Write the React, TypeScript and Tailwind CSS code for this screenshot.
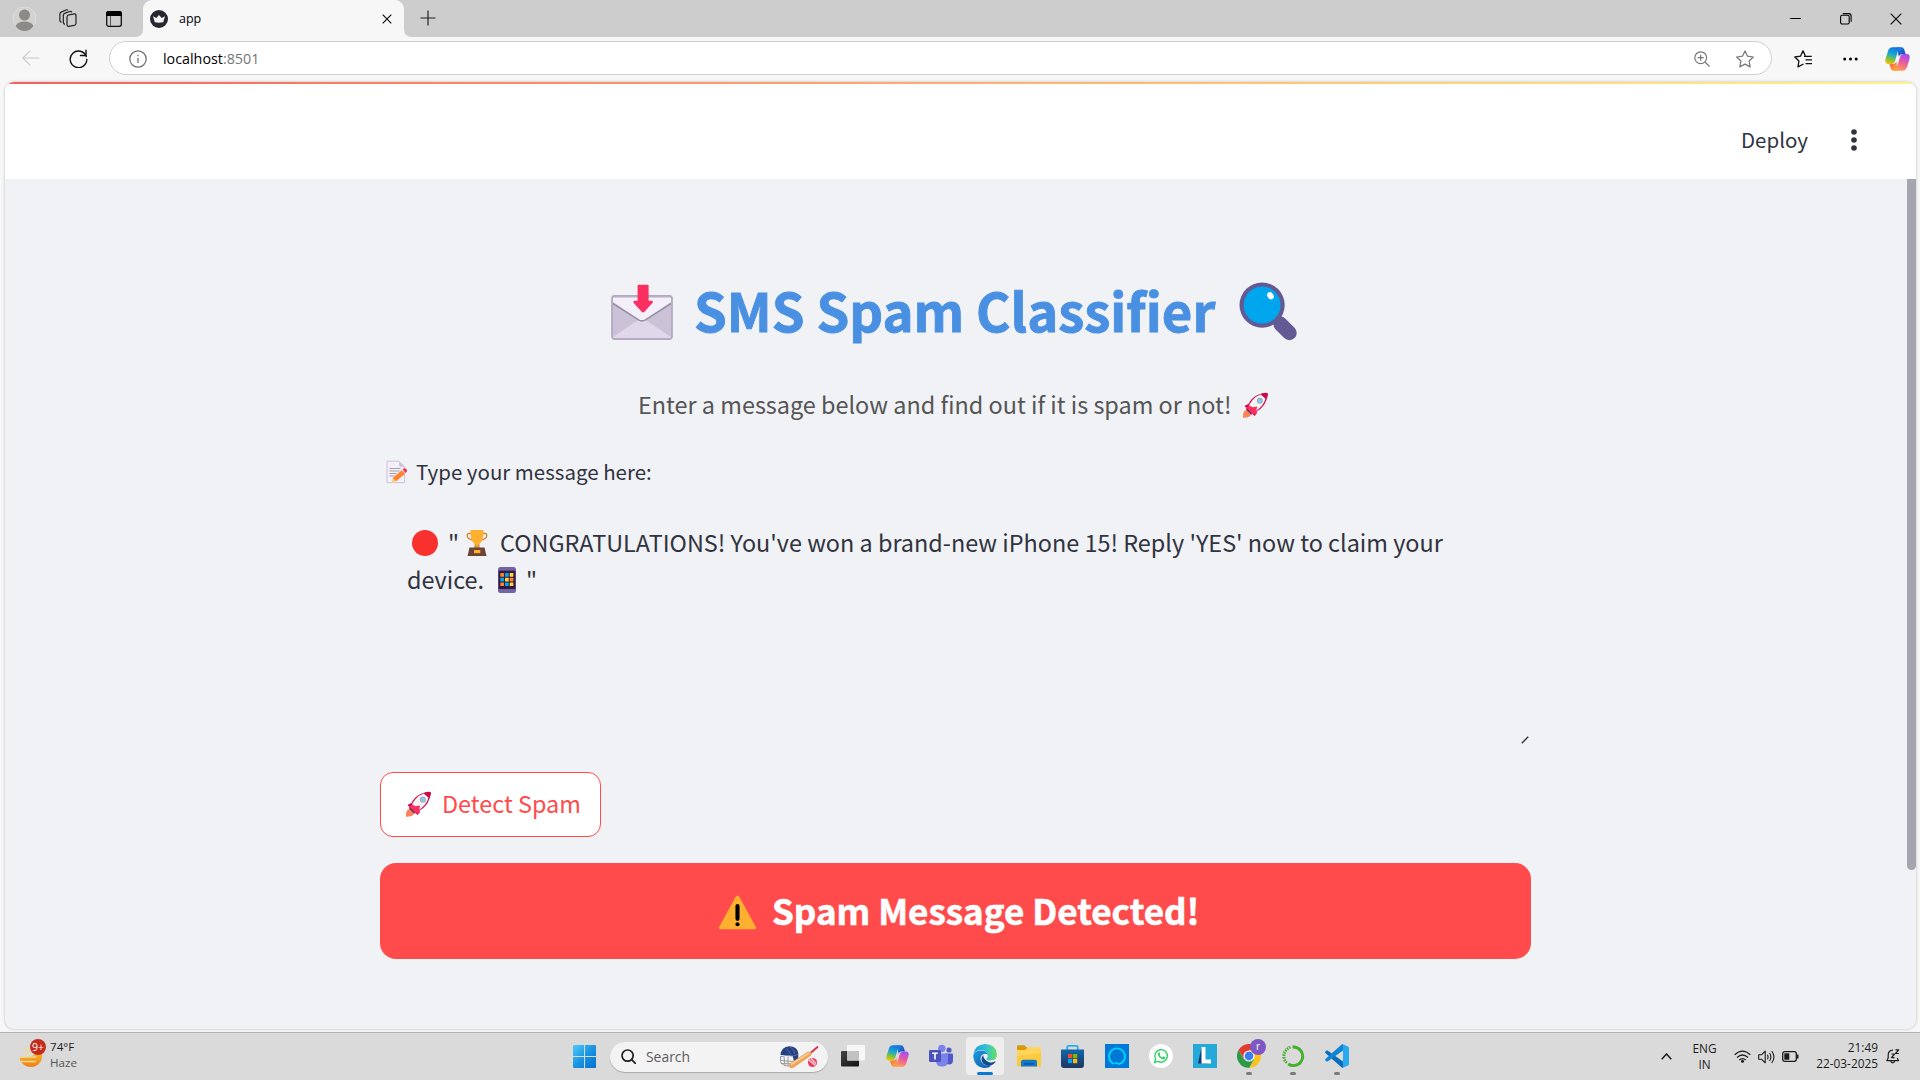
import type { ReactNode } from "react";

type IconProps = { className?: string };

/* ---------- emoji ---------- */

function EnvelopeEmoji({ className }: IconProps) {
  return (
    <svg viewBox="0 0 64 58" className={className} fill="none">
      <rect x="1" y="12" width="61" height="44" rx="3" fill="#cbc2d7" />
      <path d="M2 54 31.5 34 61 54v1H2z" fill="#e0d7ea" />
      <path d="M2 18 28 36q3.500 2 7 0L61 18v-4H2z" fill="#f4f0fa" />
      <path d="M2 20 28 36.500q3.500 2 7 0L61 20" stroke="#998ea4" strokeWidth="1.600" />
      <rect x="1" y="12" width="61" height="44" rx="2.500" stroke="#b4a9c0" strokeWidth="1.800" />
      <path d="M27 1.500q0-.8.8-.8h9.600q.8 0 .8.800V17h3.600q1.600.8.300 2.300l-8.300 9.300q-1.200 1-2.400 0l-8.300-9.300Q22 17.500 23.500 17H27z" fill="#fb2f60" />
    </svg>
  );
}

function MagnifierEmoji({ className }: IconProps) {
  return (
    <svg viewBox="0 0 60 60" className={className}>
      <path d="M35 38q0-3 3-3h5q2 0 4 2l9.500 9.500a7.300 7.300 0 0 1-10.500 10.500l-9-9q-2-2-2-5z" fill="#635994" />
      <circle cx="23.500" cy="23.500" r="23" fill="#635994" />
      <circle cx="23.500" cy="23.500" r="18.800" fill="#00a6ed" />
      <ellipse cx="32" cy="14" rx="3" ry="4" transform="rotate(-32 32 14)" fill="#fff" />
    </svg>
  );
}

function RocketEmoji({ className }: IconProps) {
  return (
    <svg viewBox="0 0 27 27" className={className}>
      <path d="M7 12 2.500 14.300q-.8.600.2 1l2.700 2zM15 20l-1.800 4.500q-.6.900-1.200 0L9.800 22z" fill="#ca0b4a" />
      <path d="M25 1Q15 1.500 10 7 5.500 12 5 16.500l5.500 5.500Q17 20 21 15q5-6 5-13.500z" fill="#ca0b4a" />
      <path d="M19 2.600Q13.500 4.500 10.500 8.200 7 12.200 5.800 16.500l5 4.700q5.500-2 9.200-6.600 3-4 4-8.200z" fill="#f4f4f4" />
      <path d="M26.400 1.200Q23 .2 19 2.400l5.500 5.200Q26.800 4 26.400 1.200z" fill="#ca0b4a" />
      <path d="m7 14 3.500 1.800 4.800-.8-1 4.500 1 3-3.300.2-3 1-5-5L3.500 17z" fill="#fb2f60" />
      <path d="M5.500 18.500 9 22l-1 3.300q-3 1.700-7.500 1.400-.2-4.800 1.500-7.200z" fill="#ff8259" />
      <path d="m5 17.500 4.600 4.600-1 1.100-4.500-4.500z" fill="#533566" />
      <circle cx="18" cy="9" r="3" fill="#9b9b9b" />
      <circle cx="18" cy="9" r="2.300" fill="#83cbff" />
    </svg>
  );
}

function MemoEmoji({ className }: IconProps) {
  return (
    <svg viewBox="0 0 22 24" className={className}>
      <path d="M1 1.200h12l5.500 5.500v16H1z" fill="#f3eef8" stroke="#cdc4d6" strokeWidth="1" />
      <path d="M13 1.200V5q0 1.700 1.800 1.700h3.700z" fill="#cdc4d6" />
      <path d="M3.500 8.500h11M3.500 11h10M3.500 13.500h7M3.500 16h5" stroke="#9b9b9b" strokeWidth=".9" />
      <path d="m5.500 22.500 1.200-4.600 3.500 3.300z" fill="#ffce7c" />
      <path d="m6.700 17.900 9-7.700 3.300 3.500-8.800 7.500z" fill="#ff822d" />
      <path d="m16.500 9.600 1.300-1.100q1.300-.7 2.500.5t.5 2.700L19.600 13z" fill="#fb2f60" />
    </svg>
  );
}

function TrophyEmoji({ className }: IconProps) {
  return (
    <svg viewBox="0 0 22 26" className={className} fill="none">
      <path d="M6 3.500H3Q1 3.500 1.300 6t3 3.300L7 10M16 3.500h3q2 0 1.700 2.500t-3 3.300L15 10" stroke="#d3883e" strokeWidth="1.400" />
      <path d="M9 12h4l.8 6H8.200z" fill="#d3883e" />
      <path d="M4.500 0h13q.2 6-1 9.500Q14.500 14 12 14.500v2h-2v-2Q7.500 14 5.500 9.500 4.300 6 4.500 0z" fill="#ffb02e" />
      <path d="M3.500 17.500h15l2 8.500h-19z" fill="#6d4534" />
      <rect x="8" y="20" width="6.300" height="3.200" fill="#ffb02e" />
    </svg>
  );
}

function PhoneEmoji({ className }: IconProps) {
  return (
    <svg viewBox="0 0 18 26" className={className}>
      <rect width="18" height="26" rx="2.500" fill="#7163a6" />
      <rect x=".6" y="3.700" width="16.800" height="18.300" fill="#321b41" />
      <rect x="2.300" y="6" width="3.700" height="3.700" rx=".5" fill="#ff822d" />
      <rect x="7" y="6" width="3.700" height="3.700" rx=".5" fill="#00a6ed" />
      <rect x="11.700" y="6" width="3.700" height="3.700" rx=".5" fill="#fcd53f" />
      <rect x="2.300" y="10.700" width="3.700" height="3.700" rx=".5" fill="#00a6ed" />
      <rect x="7" y="10.700" width="3.700" height="3.700" rx=".5" fill="#fcd53f" />
      <rect x="11.700" y="10.700" width="3.700" height="3.700" rx=".5" fill="#ff822d" />
      <rect x="2.300" y="15.400" width="3.700" height="3.700" rx=".5" fill="#ff822d" />
      <rect x="7" y="15.400" width="3.700" height="3.700" rx=".5" fill="#00a6ed" />
      <rect x="11.700" y="15.400" width="3.700" height="3.700" rx=".5" fill="#fcd53f" />
    </svg>
  );
}

function WarningEmoji({ className }: IconProps) {
  return (
    <svg viewBox="0 0 40 35" className={className}>
      <path d="M18 1.500q2-2.500 4 0l17 31q.7 2-1.500 2.300h-35Q.3 34.500 1 32.500z" fill="#ffb02e" />
      <path d="M20 11v13" stroke="#000" strokeWidth="4.200" strokeLinecap="round" />
      <circle cx="20" cy="29.500" r="2.100" fill="#000" />
    </svg>
  );
}

/* ---------- shared marks ---------- */

function CopilotIcon({ className, id }: IconProps & { id: string }) {
  const a = id + "a";
  const b = id + "b";
  const c = id + "c";
  const d = id + "d";
  return (
    <svg viewBox="0 0 25 24" className={className}>
      <defs>
        <linearGradient id={a} x1=".6" y1="0" x2=".3" y2="1">
          <stop offset="0" stopColor="#1474e0" />
          <stop offset=".4" stopColor="#15a5d8" />
          <stop offset=".7" stopColor="#6fc24a" />
          <stop offset="1" stopColor="#f2c200" />
        </linearGradient>
        <linearGradient id={b} x1=".6" y1="0" x2=".3" y2="1">
          <stop offset="0" stopColor="#a44df0" />
          <stop offset=".5" stopColor="#ee5c9c" />
          <stop offset="1" stopColor="#ff9f4a" />
        </linearGradient>
        <linearGradient id={c} x1="0" y1="0" x2="1" y2="1">
          <stop offset="0" stopColor="#1b8df0" />
          <stop offset="1" stopColor="#1a3fa8" />
        </linearGradient>
        <linearGradient id={d} x1="0" y1="0" x2="1" y2="1">
          <stop offset="0" stopColor="#f5622e" />
          <stop offset="1" stopColor="#ffb04a" />
        </linearGradient>
      </defs>
      <path d="M12 .3h4.500q2 0 2.700 2.200l1.500 4.700h-4q-2.200 0-3 2.500z" fill={`url(#${c})`} />
      <path d="M13 23.700H8.500q-2 0-2.700-2.200l-1.500-4.700h4q2.200 0 3-2.500z" fill={`url(#${d})`} />
      <path d="M7.500.3h8q-1.500.5-2.200 2.700L10 14q-.9 2.900-3.500 2.900H3.300Q-.5 16.800.5 12L3 4Q4.200.3 7.500.3z" fill={`url(#${a})`} />
      <path d="M17.500 23.700h-8q1.500-.5 2.200-2.700L15 10q.9-2.900 3.500-2.900h3.200q3.800.1 2.800 4.900L22 20q-1.200 3.700-4.500 3.700z" fill={`url(#${b})`} />
    </svg>
  );
}

/* ---------- browser chrome ---------- */

function TabStrip() {
  return (
    <div className="flex h-[37px] items-start bg-[#cdcdcd] text-black">
      <svg viewBox="0 0 24 26" className="mt-[6px] ml-[12px] h-[26px] w-[24px]">
        <circle cx="12.500" cy="12.500" r="11.500" fill="#d4d2cf" stroke="#e0dedb" strokeWidth="1" />
        <circle cx="12.500" cy="9" r="5.500" fill="#8c8986" />
        <path d="M3.500 20q2-4.500 9-4.500t9 4.500q-3.500 5-9 5t-9-5z" fill="#8c8986" />
      </svg>
      <svg viewBox="0 0 20 20" className="mt-[9px] ml-[22px] h-[20px] w-[20px]" fill="none" stroke="#222" strokeWidth="1.200" strokeLinejoin="round">
        <rect x="9" y="5.500" width="9" height="11.500" rx="1.800" transform="skewY(-9) translate(0 2)" />
        <path d="M7 15.300Q5.300 15 5.300 13.500V6.400q0-1.500 1.300-2l5-1.900q1.400-.4 2.200.8" />
        <path d="M3.600 13.200q-1.700-.2-1.700-1.800V5q0-1.300 1.200-1.900L8 1q1.200-.4 2 .3" />
      </svg>
      <svg viewBox="0 0 16 16" className="mt-[11px] ml-[28px] h-[16px] w-[16px]">
        <rect x=".7" y=".7" width="14.600" height="14.600" rx="2" fill="none" stroke="#111" strokeWidth="1.300" />
        <path d="M0 5V2.500Q0 0 2.500 0h11Q16 0 16 2.500V5z" />
        <path d="M4.500 5v10" stroke="#555" />
      </svg>
      <svg viewBox="0 0 8 8" className="mt-[29px] ml-[13px] h-[8px] w-[8px]">
        <path d="M8 0v8H0Q8 8 8 0z" fill="#f7f7f7" />
      </svg>
      <div className="flex h-[37px] w-[261px] items-start rounded-t-[9px] bg-[#f7f7f7]">
        <svg viewBox="0 0 18 18" className="mt-[10px] ml-[7px] h-[18px] w-[18px]">
          <circle cx="9" cy="9" r="9" fill="#262730" />
          <path d="M3 6.300 6.300 8 9 5l2.700 3L15 6.300l-1.800 6q-4.200.9-8.400 0z" fill="#f5f5f5" />
        </svg>
        <span className="mt-[9px] ml-[11px] w-[180px] font-[Open_Sans,sans-serif] text-[12.500px] leading-[20px]">app</span>
        <svg viewBox="0 0 10 10" className="mt-[14px] ml-[23px] h-[10px] w-[10px]" stroke="#111" strokeWidth="1.200">
          <path d="m.7.7 8.600 8.600M9.300.7.700 9.300" />
        </svg>
      </div>
      <svg viewBox="0 0 8 8" className="mt-[29px] h-[8px] w-[8px]">
        <path d="M0 0v8h8Q0 8 0 0z" fill="#f7f7f7" />
      </svg>
      <svg viewBox="0 0 16 16" className="mt-[10px] ml-[8px] h-[16px] w-[16px]" stroke="#222" strokeWidth="1.200">
        <path d="M8 .5v15M.5 8h15" />
      </svg>
      <div className="grow" />
      <svg viewBox="0 0 11 11" className="mt-[13px] h-[11px] w-[11px]" stroke="#000" strokeWidth="1">
        <path d="M0 5.500h11" />
      </svg>
      <svg viewBox="0 0 12 12" className="mt-[13px] ml-[39px] h-[12px] w-[12px]" fill="none" stroke="#000" strokeWidth="1.100">
        <rect x=".6" y="2.200" width="8.600" height="8.800" rx="1.500" />
        <path d="M2.800.6h6q2.300.1 2.300 2.400v5.800" />
      </svg>
      <svg viewBox="0 0 12 12" className="mt-[13px] mr-[18px] ml-[38px] h-[12px] w-[12px]" stroke="#000" strokeWidth="1.100">
        <path d="m.7.7 10.600 10.600M11.300.7.700 11.300" />
      </svg>
    </div>
  );
}

function Toolbar() {
  return (
    <div className="flex h-[45px] items-start bg-[#f7f7f7]">
      <svg viewBox="0 0 18 16" className="mt-[13px] ml-[22px] h-[16px] w-[18px]" fill="none" stroke="#cacaca" strokeWidth="1.200">
        <path d="M17.500 8H.8M8.300.6.800 8l7.500 7.400" />
      </svg>
      <svg viewBox="0 0 19 19" className="mt-[12px] ml-[29px] h-[19px] w-[19px]" fill="none" stroke="#111" strokeWidth="1.400">
        <path d="M17.300 7.500A8.300 8.300 0 1 0 17.800 10.500" strokeLinecap="round" />
        <path d="M17 1.200v5.300h-5.500" strokeLinejoin="round" strokeLinecap="round" />
      </svg>
      <div className="mt-[4px] ml-[21px] flex h-[34px] w-[1663px] items-start rounded-full border border-[#cfcfcf] bg-white">
        <svg viewBox="0 0 18 18" className="mt-[8px] ml-[19px] h-[18px] w-[18px]" fill="none" stroke="#6b6b6b" strokeWidth="1.200">
          <circle cx="9" cy="9" r="8.200" />
          <path d="M9 8v5M9 4.800v1.500" />
        </svg>
        <span className="mt-[7px] ml-[16px] grow font-[Open_Sans,sans-serif] text-[14.300px] leading-[20px] text-black">
          localhost<span className="text-[#767676]">:8501</span>
        </span>
        <svg viewBox="0 0 16 16" className="mt-[9px] h-[16px] w-[16px]" fill="none" stroke="#767676" strokeWidth="1.200">
          <circle cx="6.700" cy="6.700" r="5.900" />
          <path d="m11 11 4.500 4.500M6.700 3.700v6M3.700 6.700h6" />
        </svg>
        <svg viewBox="0 0 18 18" className="mt-[8px] mr-[17px] ml-[26px] h-[18px] w-[18px]" fill="none" stroke="#767676" strokeWidth="1.200" strokeLinejoin="round">
          <path d="m9 .9 2.500 5.300 5.800.8-4.200 4 1.100 5.900L9 14.100l-5.200 2.800 1.100-5.900L.7 7l5.800-.8z" />
        </svg>
      </div>
      <svg viewBox="0 0 18 18" className="mt-[13px] ml-[22px] h-[18px] w-[18px]" fill="none" stroke="#111" strokeWidth="1.300" strokeLinejoin="round">
        <path d="M9.500 14 4 16.900l.9-5.900L.8 7l5.700-.8L9 .9l2.300 4.900M10 6.300h7.800M11.500 9.900H18M11.500 13.700H18" />
      </svg>
      <svg viewBox="0 0 15 4" className="mt-[20px] ml-[31px] h-[4px] w-[15px]">
        <circle cx="1.700" cy="2" r="1.500" />
        <circle cx="7.500" cy="2" r="1.500" />
        <circle cx="13.200" cy="2" r="1.500" />
      </svg>
      <CopilotIcon id="bar" className="mt-[10px] ml-[27px] h-[24px] w-[25px]" />
    </div>
  );
}

/* ---------- application page ---------- */

function AppPage() {
  return (
    <div className="flex h-[950px] bg-[#f7f7f7] pl-[5px]">
      <div className="h-[947px] w-[1911px] overflow-hidden rounded-[9px] bg-[#f0f2f6] font-[Noto_Sans_CJK_SC,sans-serif] text-[#31333f] shadow-[0_0_3px_rgba(0,0,0,0.25)]">
        <div className="h-[2px] bg-gradient-to-r from-[#f55f5c] to-[#fdf488]" />
        <header className="flex h-[95px] items-start justify-end bg-white">
          <span className="mt-[40px] w-[68px] text-[20.500px] leading-[30px] whitespace-nowrap">Deploy</span>
          <svg viewBox="0 0 6 22" className="mt-[45px] mr-[59px] ml-[42px] h-[22px] w-[6px]" fill="#31333f">
            <circle cx="3" cy="3" r="2.800" />
            <circle cx="3" cy="11" r="2.800" />
            <circle cx="3" cy="19" r="2.800" />
          </svg>
        </header>

        <div className="flex h-[850px] items-start justify-between">
          <main className="ml-[375px] flex w-[1151px] flex-col">
            <div className="mt-[90px] ml-[231px] flex h-[80px] items-start">
              <EnvelopeEmoji className="mt-[15px] h-[57px] w-[63px] shrink-0" />
              <h1 className="ml-[20px] w-[545px] text-[52.600px] leading-[80px] font-bold whitespace-nowrap text-[#4a90e2] [-webkit-text-stroke:0.9px_#4a90e2]">
                SMS Spam Classifier
              </h1>
              <MagnifierEmoji className="mt-[13px] h-[59px] w-[59px] shrink-0" />
            </div>

            <div className="mt-[35px] ml-[258px] flex h-[40px] items-start">
              <p className="w-[604px] text-[23.420px] leading-[40px] whitespace-nowrap text-[#555]">
                Enter a message below and find out if it is spam or not!
              </p>
              <RocketEmoji className="mt-[8px] h-[26px] w-[27px] shrink-0" />
            </div>

            <label className="mt-[32px] ml-[6px] flex h-[30px] items-start">
              <MemoEmoji className="mt-[4px] h-[24px] w-[22px] shrink-0" />
              <span className="ml-[8px] text-[20.500px] leading-[30px] whitespace-nowrap">Type your message here:</span>
            </label>

            <div className="mt-[38px] flex h-[222px] flex-col pl-[27px] text-[23.420px] leading-[37px]">
              <div className="flex h-[37px] items-start">
                <span className="mt-[6px] ml-[5px] h-[26px] w-[26px] rounded-full bg-[#f8312f]" />
                <span className="ml-[10px] w-[18px]">"</span>
                <TrophyEmoji className="mt-[6px] h-[26px] w-[22px] shrink-0" />
                <span className="ml-[12px] whitespace-nowrap">
                  CONGRATULATIONS! You've won a brand-new iPhone 15! Reply 'YES' now to claim your
                </span>
              </div>
              <div className="flex h-[37px] items-start">
                <span className="w-[91px]">device.</span>
                <PhoneEmoji className="mt-[6px] h-[26px] w-[18px] shrink-0" />
                <span className="ml-[10px]">"</span>
              </div>
              <svg viewBox="0 0 8 8" className="mt-auto mr-[2px] mb-[2px] h-[8px] w-[8px] self-end" stroke="#333" strokeWidth="1.400">
                <path d="M.8 7.200 7.200.8" />
              </svg>
            </div>

            <button className="mt-[26px] flex h-[65px] w-[221px] items-start rounded-[13px] border border-[#ff4b4b] bg-white text-left text-[#ff4b4b]">
              <RocketEmoji className="mt-[18px] ml-[24px] h-[26px] w-[27px] shrink-0" />
              <span className="mt-[10px] ml-[10px] text-[23.420px] leading-[40px] whitespace-nowrap">Detect Spam</span>
            </button>

            <div className="mt-[26px] flex h-[96px] items-start rounded-[16px] bg-[#ff4b4b] text-white">
              <WarningEmoji className="mt-[32px] ml-[338px] h-[35px] w-[39px] shrink-0" />
              <span className="mt-[22px] ml-[15px] text-[35px] leading-[50px] font-bold whitespace-nowrap [-webkit-text-stroke:0.6px_#fff]">
                Spam Message Detected!
              </span>
            </div>
          </main>
          <div className="h-[691px] w-[9px] rounded-b-[5px] bg-[#a4a5ae]" />
        </div>
      </div>
    </div>
  );
}

/* ---------- taskbar ---------- */

function Slot({ children, mark, active }: { children: ReactNode; mark?: boolean; active?: boolean }) {
  return (
    <div className="flex h-[47px] w-[44px] flex-col items-center">
      <div className={active ? "mt-[4px] flex h-[38px] w-[38px] flex-col items-center rounded-[4px] bg-[#eeeeee] pt-[7px]" : "mt-[4px] flex h-[38px] w-[38px] flex-col items-center pt-[7px]"}>
        {children}
        {active && <span className="mt-[4px] h-[3px] w-[16px] shrink-0 rounded-full bg-[#0a78d4]" />}
        {mark && <span className="mt-[4px] h-[3px] w-[6px] shrink-0 rounded-full bg-[#7b7b7b]" />}
      </div>
    </div>
  );
}

const iconBox = "h-[24px] w-[24px] shrink-0";

function Weather() {
  return (
    <div className="relative ml-[18px] h-[32px] w-[29px]">
      <svg viewBox="0 0 29 32" className="h-[32px] w-[29px]" fill="none">
        <defs>
          <linearGradient id="sun" x1="0" y1="0" x2="0" y2="1">
            <stop offset="0" stopColor="#f7b52c" />
            <stop offset="1" stopColor="#ef7d1a" />
          </linearGradient>
        </defs>
        <path d="M2 17q4-1 10-1l6-3h6q.5 4-1 7-3.500 6-10.500 6T2 19z" fill="url(#sun)" />
        <path d="M5.500 8.500h6M6.500 11.500h8M1.500 16h16M3 20.500h14" stroke="#ecdc93" strokeWidth="1.600" strokeLinecap="round" />
      </svg>
      <span className="absolute top-[-2px] left-[12px] h-[16px] w-[16px] rounded-full bg-[#c42b1c] text-center font-[Open_Sans,sans-serif] text-[10.500px] leading-[16px] text-white">
        9+
      </span>
    </div>
  );
}

function SearchPill() {
  return (
    <div className="ml-[14px] flex h-[30px] w-[218px] items-center rounded-full bg-[#f3f3f3] shadow-[0_1px_1px_#aaa]">
      <svg viewBox="0 0 15 15" className="ml-[11px] h-[15px] w-[15px]" fill="none" stroke="#1f1f1f" strokeWidth="1.700">
        <circle cx="6.600" cy="6.600" r="5.600" />
        <path d="m10.700 10.700 3.600 3.600" strokeLinecap="round" />
      </svg>
      <span className="ml-[10px] grow font-[Open_Sans,sans-serif] text-[13.900px] leading-[20px] text-[#5c5c5c]">Search</span>
      <svg viewBox="0 0 40 24" className="mr-[9px] h-[24px] w-[40px]" fill="none">
        <path d="M1.500 12v4.500q2 4.500 8 4.500l6-1.500M2 15.500l12 1M5 12l1 8.500M9 12v9M1.800 18.500l13 .3" stroke="#9b9b9b" strokeWidth="1" />
        <path d="M1.500 10Q2 2 10.500 1.200 18 1.200 19.300 8v8l-4 2.500-1.500-7.500Q7 9.500 1.500 10z" fill="#27407e" />
        <path d="M1 12q5-2.500 13-1l5-1.500M6.500 3q4 2.500 5 6.500M11 1.800q4.500 2.500 5 7" stroke="#5273b8" strokeWidth=".8" />
        <path d="m31.500 8 7-6" stroke="#d9304c" strokeWidth="1.800" strokeLinecap="round" />
        <path d="m10.500 18.800 18-12q2-1 3.600.5 1.500 2-.4 3.500L15 22.500q-2.500 1.500-4.500-.3-1.500-2 0-3.400z" fill="#eda55c" />
        <path d="m12 19.500 18-11.500" stroke="#f9cf94" strokeWidth="1.600" />
        <circle cx="33.500" cy="17.500" r="4.600" fill="#ee3f5d" />
        <path d="m30 15 6.500 5.500M32 13.500l5 5" stroke="#fbd5dc" strokeWidth="1.500" />
      </svg>
    </div>
  );
}

function Taskbar() {
  return (
    <div className="flex h-[48px] items-center border-t border-[#b1b1b1] bg-[#dadada] font-[Open_Sans,sans-serif]">
      <Weather />
      <div className="mb-[3px] ml-[3px] w-[60px] text-[11.600px] leading-[16px]">
        <div className="text-[#1c1c1c]">74°F</div>
        <div className="text-[#555]">Haze</div>
      </div>
      <svg viewBox="0 0 23 23" className="ml-[463px] h-[23px] w-[23px]">
        <defs>
          <linearGradient id="win" x1="0" y1="0" x2="1" y2="1">
            <stop offset="0" stopColor="#4ccbfb" />
            <stop offset=".5" stopColor="#1a95e0" />
            <stop offset="1" stopColor="#0470cf" />
          </linearGradient>
        </defs>
        <path d="M1 0h10v11H0V1q0-1 1-1zM12 0h10q1 0 1 1v10H12zM0 12h11v11H1q-1 0-1-1zM12 12h11v10q0 1-1 1H12z" fill="url(#win)" />
      </svg>
      <SearchPill />
      <div className="ml-[3px] flex h-[47px]">
        <Slot>
          <svg viewBox="0 0 24 24" className={iconBox}>
            <defs>
              <linearGradient id="tv" x1="0" y1="0" x2="1" y2="1">
                <stop offset="0" stopColor="#444" />
                <stop offset="1" stopColor="#111" />
              </linearGradient>
            </defs>
            <rect x="0" y="7" width="18" height="15.500" rx="1" fill="url(#tv)" />
            <rect x="6" y="1" width="18" height="15.500" rx="1" fill="#f7f7f7" />
            <path d="M6 7h12v9.500H7q-1 0-1-1z" fill="#c2c2c2" />
          </svg>
        </Slot>
        <Slot>
          <CopilotIcon id="task" className="mt-[1px] h-[22px] w-[23px] shrink-0" />
        </Slot>
        <Slot>
          <svg viewBox="0 0 24 24" className={iconBox}>
            <circle cx="20" cy="6" r="2.600" fill="#5059c9" />
            <path d="M16 9.500h7q1 0 1 1v5.800q0 4.200-4 4.200-3.500 0-4-4z" fill="#5059c9" />
            <circle cx="12.800" cy="4.500" r="3.700" fill="#7b83eb" />
            <path d="M7 9.500h11q1 0 1 1v6.500q0 5.500-6 5.500t-6-5.500z" fill="#7b83eb" />
            <rect x="0" y="6" width="12" height="12" rx="1.200" fill="#4a52bd" />
            <path d="M3.200 8.500h5.600v1.500H6.800v5.600H5.200V10h-2z" fill="#fff" />
          </svg>
        </Slot>
        <Slot active>
          <svg viewBox="0 0 24 24" className={iconBox}>
            <defs>
              <linearGradient id="eg1" x1="0" y1=".4" x2="1" y2=".4">
                <stop offset="0" stopColor="#1f9ce0" />
                <stop offset=".55" stopColor="#33c3d2" />
                <stop offset="1" stopColor="#6be05a" />
              </linearGradient>
              <linearGradient id="eg2" x1="0" y1="0" x2="1" y2="1">
                <stop offset="0" stopColor="#1b9de2" />
                <stop offset="1" stopColor="#0f58a8" />
              </linearGradient>
            </defs>
            <path d="M.3 11Q1.500.5 12 0q11 .5 12 10 0 6.500-6.500 6.500-4.300 0-4-2 1.700-1.500 1.200-4Q13.500 6 7 6 2 6.500.3 11z" fill="url(#eg1)" />
            <path d="M.2 11.500Q2 6.500 7.500 6.500q6 0 7.200 4-3.500-1.800-6 .8-2.500 3.500.3 7.500 3 3.800 9 3.200-2.500 2-6 2Q1 23.500.2 11.500z" fill="url(#eg2)" />
            <path d="M10.200 11q-3.500 4-.2 8.500 5 4.500 10.500.5 2-1.500 2.300-2.700-3.300 1.700-6.500.9-6-1.800-6.100-7.200z" fill="#134a94" />
          </svg>
        </Slot>
        <Slot>
          <svg viewBox="0 0 24 24" className={iconBox}>
            <path d="M0 2.500q0-1.200 1.200-1.200h6L10 3.500V7H0z" fill="#d99a0a" />
            <path d="M0 6h8.500l2.500-2.700h12q1 0 1 1V21.500q0 1-1 1H1q-1 0-1-1z" fill="#fcca3f" />
            <path d="M0 6h8.500l2.500-2.700h12q1 0 1 1V9L0 12z" fill="#ffd968" opacity=".7" />
            <path d="M4 22.500V18q0-2.200 2.200-2.200h11.600Q20 15.800 20 18v4.500z" fill="#1378cc" />
            <rect x="7" y="19" width="10" height="1.800" rx=".9" fill="#0c59a4" />
          </svg>
        </Slot>
        <Slot>
          <svg viewBox="0 0 24 24" className={iconBox}>
            <defs>
              <linearGradient id="st" x1="0" y1="0" x2="0" y2="1">
                <stop offset="0" stopColor="#1467a9" />
                <stop offset="1" stopColor="#1e3560" />
              </linearGradient>
            </defs>
            <path d="M6.200 6V3q0-1.200 1.300-1.200h8Q16.800 1.800 16.800 3v3" fill="none" stroke="#22b1ee" strokeWidth="1.800" />
            <path d="M0 5.500h23V21q0 3-3 3H3q-3 0-3-3z" fill="url(#st)" />
            <path d="M7 10h4.200v4.200H7z" fill="#f25022" />
            <path d="M12 10h4.200v4.200H12z" fill="#7fba00" />
            <path d="M7 15h4.200v4.200H7z" fill="#00a4ef" />
            <path d="M12 15h4.200v4.200H12z" fill="#ffb900" />
          </svg>
        </Slot>
        <Slot>
          <svg viewBox="0 0 24 24" className={iconBox}>
            <rect width="24" height="24" fill="#0078d7" />
            <path d="M9.500 20A8 8 0 1 1 14.500 20L10 18.600" fill="none" stroke="#00d2fb" strokeWidth="1.800" />
          </svg>
        </Slot>
        <Slot>
          <svg viewBox="0 0 24 24" className={iconBox}>
            <circle cx="12" cy="12" r="12" fill="#fff" />
            <path d="m5.600 18.500 1-3.500a6.300 6.300 0 1 1 2.400 2.400z" fill="none" stroke="#2fd366" strokeWidth="1.400" />
            <path d="M9.700 8.500q.5-.4.900.1l.7 1.500q.1.400-.6 1.200 1 1.700 2.600 2.300l.9-1q.3-.2.600 0l1.500.8q.3.200 0 .9-.9 1.500-2.700 1-3.800-1.200-4.900-4.700-.1-1.200 1-2.100z" fill="#2fd366" />
          </svg>
        </Slot>
        <Slot>
          <svg viewBox="0 0 24 24" className={iconBox}>
            <rect width="24" height="24" fill="#25a9d8" />
            <path d="M8.500 3 5 19.500h10L9 15z" fill="#123a6b" />
            <path d="M8.500 3h4v12.500H18v4H8.500z" fill="#fff" />
          </svg>
        </Slot>
        <Slot mark>
          <div className="relative h-[24px] w-[24px] shrink-0">
            <svg viewBox="0 0 24 24" className="h-[24px] w-[24px]">
              <path d="M12 12 1.600 6A12 12 0 0 1 22.400 6z" fill="#e33b2e" />
              <path d="M12 12v-6h10.400A12 12 0 0 1 12 24l5.200-9z" fill="#fcc31e" />
              <path d="m12 12 5.200 3L12 24A12 12 0 0 1 1.600 6l5.200 9z" fill="#2c9b48" />
              <path d="M1.600 6 7 15l5-9z" fill="#e33b2e" />
              <circle cx="12" cy="12" r="5.600" fill="#fff" />
              <circle cx="12" cy="12" r="4.400" fill="#3c7ded" />
            </svg>
            <span className="absolute top-[-5px] left-[13px] h-[16px] w-[16px] rounded-full bg-[#7e57c2] text-center font-[Open_Sans,sans-serif] text-[10px] leading-[14px] text-white">
              r
            </span>
          </div>
        </Slot>
        <Slot mark>
          <svg viewBox="0 0 24 24" className={iconBox} fill="none" stroke="#43b02a">
            <path d="M11.500 3a9.300 9.300 0 1 1-4.300 17" strokeWidth="2.900" />
            <path d="M9.500 3.200A9.500 9.500 0 0 0 6.500 19.500" strokeWidth="2.600" strokeDasharray="1.500 1" />
            <path d="M7.500 2.500A11 11 0 0 0 4 19" strokeWidth="1" strokeDasharray="1.200 2" />
          </svg>
        </Slot>
        <Slot mark>
          <svg viewBox="0 0 24 24" className={iconBox}>
            <path d="M18 17.600 2.600 6.600Q1.900 6.200 1.300 6.700L.4 7.600q-.6.600 0 1.300L17 23.800q1 .5 1-.3z" fill="#0a6ebd" />
            <path d="M18 6.400 2.600 17.400q-.7.400-1.300-.1l-.9-.9q-.6-.6 0-1.300L17 .2q1-.5 1 .3z" fill="#0d84d4" />
            <path d="m17.500 0 5.500 2.500q1 .5 1 1.500v16q0 1-1 1.500L17.500 24q.5-.5.500-2V2q0-1.500-.5-2z" fill="#29a9f2" />
          </svg>
        </Slot>
      </div>
      <div className="grow" />
      <svg viewBox="0 0 11 7" className="h-[7px] w-[11px]" fill="none" stroke="#1c1c1c" strokeWidth="1.500">
        <path d="M.7 6.200 5.500 1l4.800 5.200" />
      </svg>
      <div className="mb-[1px] ml-[19px] w-[27px] text-center text-[11.800px] leading-[16px] text-[#1c1c1c]">
        <div>ENG</div>
        <div>IN</div>
      </div>
      <svg viewBox="0 0 17 13" className="ml-[16px] h-[13px] w-[17px]" fill="none" stroke="#1c1c1c" strokeWidth="1.200">
        <path d="M.7 4.800q7.800-7.300 15.600 0M3 7.500q5.500-5 11 0M5.300 10q3.200-2.800 6.400 0" />
        <circle cx="8.500" cy="11.300" r="1.500" fill="#1c1c1c" stroke="none" />
      </svg>
      <svg viewBox="0 0 17 14" className="ml-[7px] h-[14px] w-[17px]" fill="none" stroke="#1c1c1c" strokeWidth="1.100" strokeLinejoin="round">
        <path d="M.7 4.700h3L7.200 1.200v11.600L3.700 9.300h-3zM9.300 4.700q1.600 2.300 0 4.600M11.500 3q2.800 4 0 8M13.700 1q4.500 6 0 12" />
      </svg>
      <svg viewBox="0 0 17 11" className="ml-[7px] h-[11px] w-[17px]" fill="none" stroke="#1c1c1c">
        <rect x=".7" y=".7" width="13.600" height="9.600" rx="2" strokeWidth="1.300" />
        <rect x="2.300" y="2.300" width="5" height="6.400" fill="#1c1c1c" stroke="none" />
        <path d="M15.700 3.500v4" strokeWidth="1.500" />
      </svg>
      <div className="mb-[3px] ml-[13px] w-[66px] text-right text-[11.850px] leading-[16px] text-[#1c1c1c]">
        <div>21:49</div>
        <div>22-03-2025</div>
      </div>
      <svg viewBox="0 0 14 15" className="mr-[20px] ml-[8px] h-[15px] w-[14px]" fill="none" stroke="#1c1c1c" strokeWidth="1.200" strokeLinejoin="round">
        <path d="M7 1.200Q2.200 1.500 2.200 6v3L.8 11.700h11.700L11.200 9M4.800 12q.2 1.800 1.900 1.800T8.600 12" />
        <path d="M5.500 5h3l-3 3.700h3M9.500.8h3.300L9.500 4.500h3.300" />
      </svg>
    </div>
  );
}

export default function App() {
  return (
    <div className="flex h-[1080px] w-[1920px] flex-col overflow-hidden">
      <TabStrip />
      <Toolbar />
      <AppPage />
      <Taskbar />
    </div>
  );
}
